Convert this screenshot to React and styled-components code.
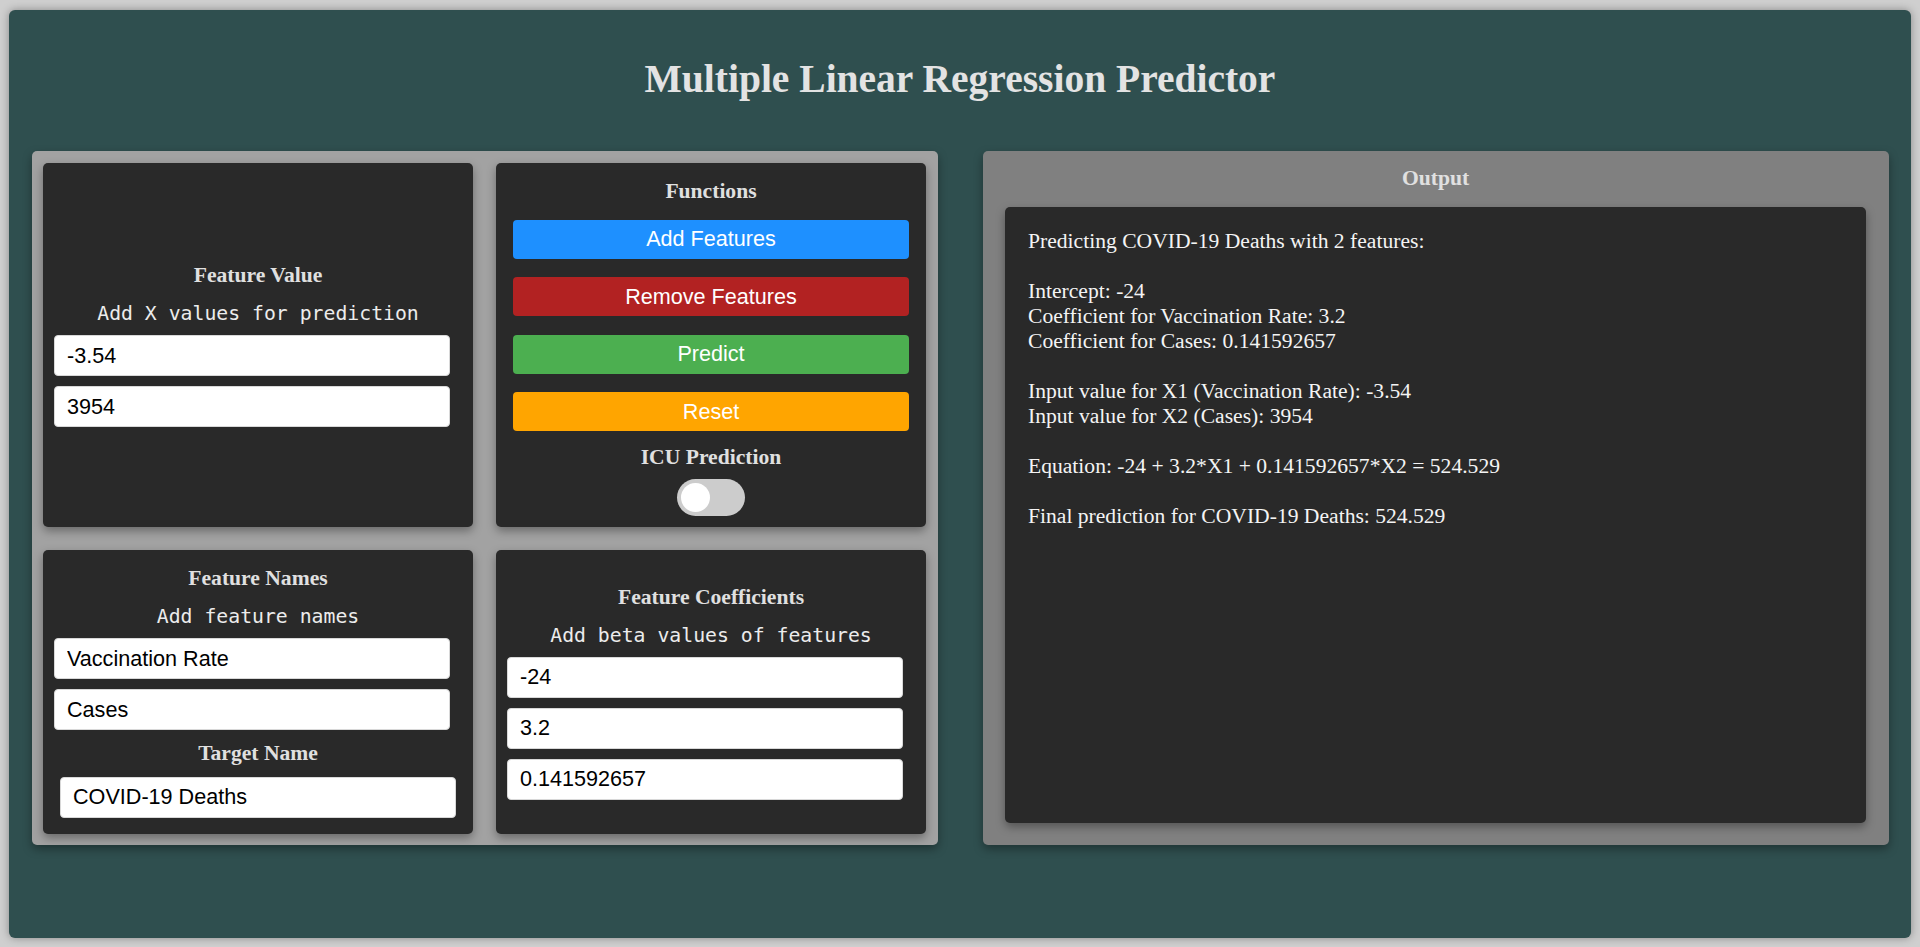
import React, { useState } from 'react';
import styled, { createGlobalStyle } from 'styled-components';

const GlobalStyle = createGlobalStyle`
  html, body, #root {
    height: 100%;
  }

  body {
    margin: 0;
    padding: 10px 9px 9px 9px;
    box-sizing: border-box;
    background: #cfcfcf;
    font-family: "Liberation Serif", "Times New Roman", serif;
  }

  * {
    box-sizing: border-box;
  }
`;

const Page = styled.div`
  height: 100%;
  display: flex;
  flex-direction: column;
  padding-top: 47px;
  background: #2f4f4f;
  border-radius: 6px;
  box-shadow: 0 0 8px rgba(0, 0, 0, 0.35);
`;

const Title = styled.h1`
  margin: 0 0 49px 0;
  font-size: 39.5px;
  line-height: 45px;
  font-weight: bold;
  text-align: center;
  color: #e3e3e3;
`;

const Columns = styled.div`
  display: grid;
  grid-template-columns: 1fr 1fr;
  column-gap: 45px;
  padding: 0 22px 0 23px;
  align-items: stretch;
`;

const InputPanel = styled.div`
  display: grid;
  grid-template-columns: 1fr 1fr;
  grid-template-rows: 364px 284px;
  gap: 23px;
  padding: 12px 12px 11px 11px;
  background: #a2a2a2;
  border-radius: 5px;
  box-shadow: 0 4px 10px rgba(0, 0, 0, 0.35);
`;

const Card = styled.div`
  display: flex;
  flex-direction: column;
  justify-content: center;
  align-items: stretch;
  padding-top: ${p => p.$shift || 0}px;
  background: #292929;
  border-radius: 5px;
  box-shadow: 0 4px 10px rgba(0, 0, 0, 0.35);
`;

const Heading = styled.h3`
  margin: ${p => p.$space || '0'};
  font-size: 21.6px;
  line-height: 25px;
  font-weight: bold;
  text-align: center;
  color: #e0e0e0;
`;

const Hint = styled.p`
  margin: 14px 0 10px 0;
  font-family: "DejaVu Sans Mono", "Liberation Mono", monospace;
  font-size: 19.8px;
  line-height: 23px;
  text-align: center;
  color: #ececec;
`;

const Field = styled.input`
  height: 41px;
  margin: ${p => (p.$target ? '0 17px' : '0 23px 0 11px')};
  padding: 0 12px;
  border: 1px solid #d8d8d8;
  border-radius: 4px;
  background: #fff;
  color: #000;
  font-family: "Liberation Sans", Arial, sans-serif;
  font-size: 21.6px;
  outline: none;

  & + & {
    margin-top: 10px;
  }
`;

const ActionButton = styled.button`
  height: 39px;
  margin: 0 17px;
  border: none;
  border-radius: 4px;
  background: ${p => p.$color};
  color: #fff;
  font-family: "Liberation Sans", Arial, sans-serif;
  font-size: 21.6px;
  cursor: pointer;

  & + & {
    margin-top: 18.5px;
  }
`;

const Switch = styled.label`
  position: relative;
  align-self: center;
  width: 68px;
  height: 37px;
  margin-top: 8.6px;
  cursor: pointer;

  input {
    opacity: 0;
    width: 0;
    height: 0;
  }
`;

const Track = styled.span`
  position: absolute;
  inset: 0;
  border-radius: 19px;
  background: ${p => (p.$on ? '#2196f3' : '#cccccc')};
  transition: background 0.2s;

  &::before {
    content: "";
    position: absolute;
    top: 4px;
    left: ${p => (p.$on ? '35px' : '4px')};
    width: 29px;
    height: 29px;
    border-radius: 50%;
    background: #fff;
    transition: left 0.2s;
  }
`;

const OutputPanel = styled.div`
  display: flex;
  flex-direction: column;
  padding: 15px 23px 22px 22px;
  background: #808080;
  border-radius: 5px;
  box-shadow: 0 4px 10px rgba(0, 0, 0, 0.35);
`;

const OutputBox = styled.div`
  flex: 1;
  padding: 22px 23px;
  background: #292929;
  border-radius: 5px;
  box-shadow: 0 4px 10px rgba(0, 0, 0, 0.35);
  color: #f4f4f4;
  font-size: 21.6px;
  line-height: 25px;
  white-space: pre-wrap;
`;

const buttons = [
  { label: 'Add Features', color: '#1e90ff' },
  { label: 'Remove Features', color: '#b22222' },
  { label: 'Predict', color: '#4caf50' },
  { label: 'Reset', color: '#ffa500' },
];

const App = () => {
  const [xValues, setXValues] = useState(['-3.54', '3954']);
  const [names, setNames] = useState(['Vaccination Rate', 'Cases']);
  const [target, setTarget] = useState('COVID-19 Deaths');
  const [betas, setBetas] = useState(['-24', '3.2', '0.141592657']);
  const [icu, setIcu] = useState(false);

  const update = (list, setter, i) => e => {
    const next = [...list];
    next[i] = e.target.value;
    setter(next);
  };

  const output = [
    `Predicting ${target} with ${names.length} features:`,
    '',
    `Intercept: ${betas[0]}`,
    ...names.map((n, i) => `Coefficient for ${n}: ${betas[i + 1]}`),
    '',
    ...names.map((n, i) => `Input value for X${i + 1} (${n}): ${xValues[i]}`),
    '',
    'Equation: -24 + 3.2*X1 + 0.141592657*X2 = 524.529',
    '',
    `Final prediction for ${target}: 524.529`,
  ].join('\n');

  return (
    <>
      <GlobalStyle />
      <Page>
        <Title>Multiple Linear Regression Predictor</Title>
        <Columns>
          <InputPanel>
            <Card>
              <Heading>Feature Value</Heading>
              <Hint>Add X values for prediction</Hint>
              {xValues.map((v, i) => (
                <Field key={i} value={v} onChange={update(xValues, setXValues, i)} />
              ))}
            </Card>

            <Card $shift={5}>
              <Heading $space="0 0 15.6px 0">Functions</Heading>
              {buttons.map(b => (
                <ActionButton key={b.label} $color={b.color}>{b.label}</ActionButton>
              ))}
              <Heading $space="13.6px 0 0 0">ICU Prediction</Heading>
              <Switch>
                <input type="checkbox" checked={icu} onChange={() => setIcu(!icu)} />
                <Track $on={icu} />
              </Switch>
            </Card>

            <Card>
              <Heading>Feature Names</Heading>
              <Hint>Add feature names</Hint>
              {names.map((v, i) => (
                <Field key={i} value={v} onChange={update(names, setNames, i)} />
              ))}
              <Heading $space="10.6px 0">Target Name</Heading>
              <Field $target value={target} onChange={e => setTarget(e.target.value)} />
            </Card>

            <Card>
              <Heading>Feature Coefficients</Heading>
              <Hint>Add beta values of features</Hint>
              {betas.map((v, i) => (
                <Field key={i} value={v} onChange={update(betas, setBetas, i)} />
              ))}
            </Card>
          </InputPanel>

          <OutputPanel>
            <Heading $space="0 0 15.6px 0">Output</Heading>
            <OutputBox>{output}</OutputBox>
          </OutputPanel>
        </Columns>
      </Page>
    </>
  );
};

export default App;
